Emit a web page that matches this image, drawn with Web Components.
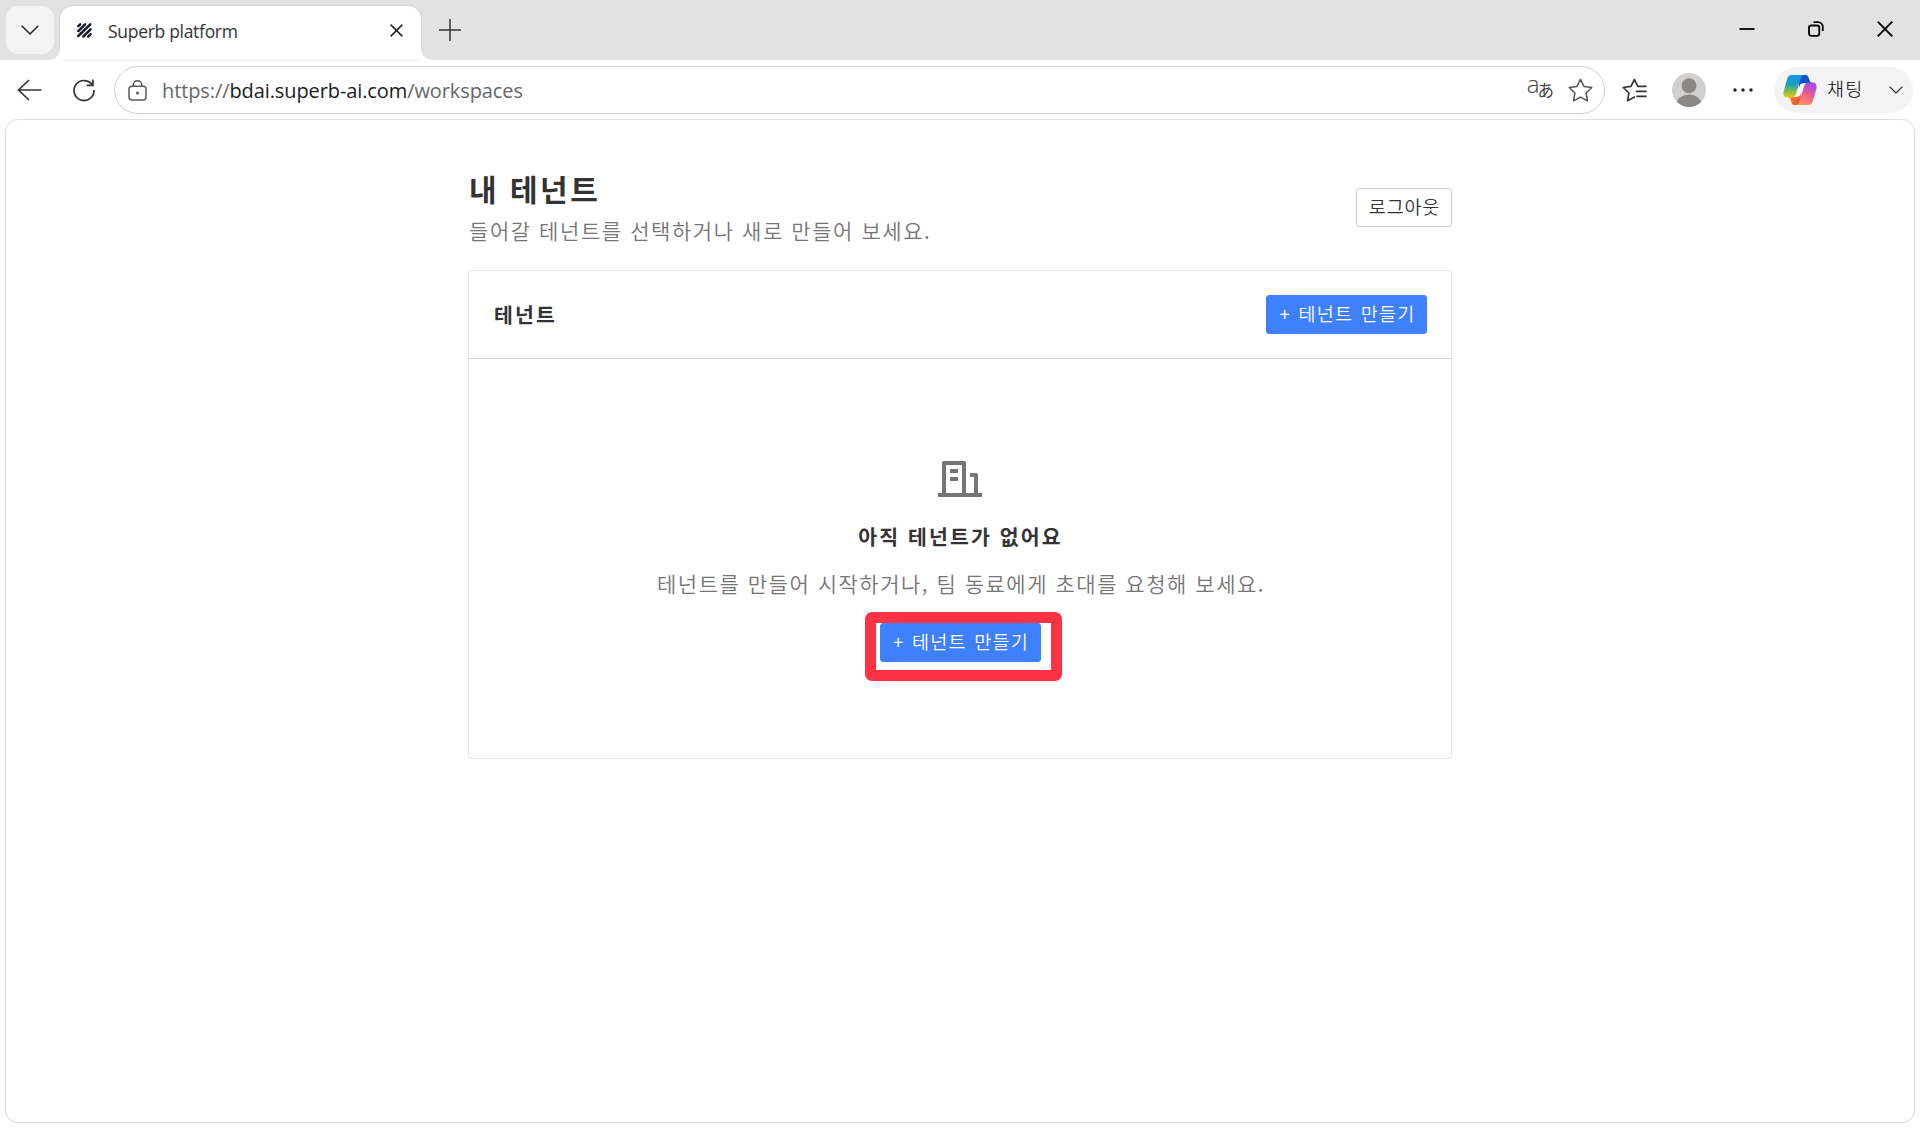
<!DOCTYPE html>
<html lang="ko">
<head>
<meta charset="utf-8">
<title>Superb platform</title>
<style>
  html, body {
    margin: 0;
    height: 100%;
  }

  body {
    font-family: "Open Sans", "Noto Sans CJK KR", sans-serif;
    background: #ffffff;
    color: #333333;
    overflow: hidden;
  }
</style>
</head>
<body>
<browser-window>
  <tab-strip slot="tabs">
    <browser-tab>Superb platform</browser-tab>
  </tab-strip>
  <nav-bar slot="nav">
    <address-field>https://<b>bdai.superb-ai.com</b>/workspaces</address-field>
  </nav-bar>
  <tenant-page></tenant-page>
</browser-window>

<script>
const icons = {
  chevron: `<svg width="18" height="10" viewBox="0 0 18 10"><path d="M.7.8 9 9 17.3.8" fill="none" stroke="#222" stroke-width="1.5"/></svg>`,
  close: `<svg width="13" height="13" viewBox="0 0 13 13"><path d="M.6.6 12.4 12.4M12.4.6.6 12.4" stroke="#222" stroke-width="1.5"/></svg>`,
  plus: `<svg width="22" height="22" viewBox="0 0 22 22"><path d="M11 0V22M0 11H22" stroke="#333" stroke-width="1.5"/></svg>`,
  logo: `<svg width="15" height="15" viewBox="0 0 15 15"><g stroke="#15152b" stroke-width="2.5" stroke-linecap="round"><path d="M1.3 3.2 3.2 1.3M1.3 8.1 8.1 1.3M1.3 13 13.2 1.3M6.4 13.5 13.5 6.4M11.2 13.6 13.6 11.2"/></g></svg>`,
  back: `<svg width="25" height="22" viewBox="0 0 25 22"><path d="M12 1 1.5 11 12 21M1.5 11H24.5" fill="none" stroke="#333" stroke-width="1.7"/></svg>`,
  reload: `<svg width="24" height="24" viewBox="0 0 24 24"><path d="M20.6 7.4A10 10 0 1 0 22 12M20.9 1.4V7.4H14.600" fill="none" stroke="#333" stroke-width="1.7"/></svg>`,
  lock: `<svg width="19" height="21" viewBox="0 0 19 21"><rect x="1" y="6.2" width="17" height="13.8" rx="3" fill="none" stroke="#5a5a5a" stroke-width="1.5"/><path d="M5.2 6V5a4.3 4.3 0 0 1 8.6 0V6" fill="none" stroke="#5a5a5a" stroke-width="1.5"/><circle cx="9.5" cy="13" r="1.5" fill="#5a5a5a"/></svg>`,
  star: `<svg width="25" height="24" viewBox="0 0 25 24"><path d="M12.5 1.3 16 8.4 23.8 9.5 18.1 15 19.5 22.8 12.5 19.1 5.5 22.8 6.9 15 1.2 9.5 9 8.4Z" fill="none" stroke="#555" stroke-width="1.5" stroke-linejoin="round"/></svg>`,
  favorites: `<svg width="25" height="24" viewBox="0 0 25 24"><g fill="none" stroke="#333" stroke-width="1.6" stroke-linejoin="round" stroke-linecap="round"><path d="M16.2 8.4H15.8L12.4 1.3 9 8.4 1.2 9.5 6.9 15 5.5 22.8 12.5 19M16 8.4H24M14.5 13.4H24M15 18.4H24"/></g></svg>`,
  avatar: `<svg width="34" height="34" viewBox="0 0 34 34"><defs><clipPath id="c"><circle cx="17" cy="17" r="17"/></clipPath></defs><g clip-path="url(#c)"><rect width="34" height="34" fill="#d2d0ce"/><circle cx="17" cy="12.7" r="7.4" fill="#8a8886"/><ellipse cx="17" cy="31.5" rx="12.6" ry="10" fill="#8a8886"/></g></svg>`,
  dots: `<svg width="20" height="4" viewBox="0 0 20 4"><g fill="#222"><circle cx="2" cy="2" r="1.7"/><circle cx="10" cy="2" r="1.7"/><circle cx="18" cy="2" r="1.7"/></g></svg>`,
  copilot: `<svg width="34" height="32" viewBox="0 0 34 32">
    <defs>
      <linearGradient id="a" x1="0" y1="0" x2="0" y2="1"><stop offset="0" stop-color="#1499e0"/><stop offset=".4" stop-color="#1a9bc4"/><stop offset=".72" stop-color="#7fc04a"/><stop offset="1" stop-color="#f2c511"/></linearGradient>
      <linearGradient id="b" x1=".6" y1="0" x2=".3" y2="1"><stop offset="0" stop-color="#a34be8"/><stop offset=".5" stop-color="#ec5a93"/><stop offset="1" stop-color="#fb9a5a"/></linearGradient>
      <linearGradient id="d" x1="0" y1="0" x2="1" y2="1"><stop offset="0" stop-color="#1557d8"/><stop offset="1" stop-color="#1b45b4"/></linearGradient>
      <linearGradient id="e" x1="0" y1="0" x2="1" y2="1"><stop offset="0" stop-color="#fba63a"/><stop offset="1" stop-color="#e8412f"/></linearGradient>
    </defs>
    <path d="M16 1H22C25 1 25.600 3 26.400 6 27 8 28 9 30 9H21C18 9 17 11 16 14Z" fill="url(#d)"/>
    <path d="M18 31H12C9 31 8.500 29 7.700 26 7.100 24 6.500 23 4.500 23H13C16 23 17 21 18 18Z" fill="url(#e)"/>
    <path d="M8.500 1H21C18.500 1 17.800 3.500 17 6.500L13.500 18C12.600 21 11.500 23.500 8 23.500H4.500C.5 23.500-.2 20 .8 16.500L4 5.500C4.900 2.500 6 1 8.500 1Z" fill="url(#a)"/>
    <path d="M25.500 31H13C15.500 31 16.200 28.500 17 25.500L20.500 14C21.400 11 22.500 8.500 26 8.500H29.500C33.500 8.500 34.200 12 33.200 15.500L30 26.500C29.100 29.500 28 31 25.500 31Z" fill="url(#b)"/>
    <path d="M17.500 10H21.500C20 11 19.500 13 19 15L17.500 20C17 21.500 16.500 22 15 22H12.500C14 21 14.300 20 15 18Z" fill="#fff"/>
  </svg>`,
  minimize: `<svg width="16" height="16" viewBox="0 0 16 16"><path d="M.5 8H15.500" stroke="#000" stroke-width="1.800"/></svg>`,
  restore: `<svg width="16" height="16" viewBox="0 0 16 16"><rect x="1" y="4.500" width="10.300" height="10.300" rx="2.200" fill="none" stroke="#000" stroke-width="1.800"/><path d="M5.500 1.200H10A4.800 4.800 0 0 1 14.800 6V10" fill="none" stroke="#000" stroke-width="1.800"/></svg>`,
  closeWindow: `<svg width="16" height="16" viewBox="0 0 16 16"><path d="M.7.7 15.300 15.300M15.300.7.7 15.300" stroke="#000" stroke-width="1.900"/></svg>`,
  building: `<svg width="44" height="36" viewBox="0 0 44 36"><path fill="#757575" d="M0 32H4V2A2 2 0 0 1 6 0H26A2 2 0 0 1 28 2V32H36V16H32V12H38A2 2 0 0 1 40 14V32H44V36H0ZM8 4V32H24V4ZM12 8H20V12H12ZM12 16H20V20H12Z" fill-rule="evenodd"/></svg>`,
};

function define(name, html) {
  const template = document.createElement("template");
  template.innerHTML = html;
  customElements.define(name, class extends HTMLElement {
    constructor() {
      super();
      this.attachShadow({ mode: "open" });
      this.shadowRoot.appendChild(template.content.cloneNode(true));
    }
  });
}

class UiIcon extends HTMLElement {
  constructor() {
    super();
    this.attachShadow({ mode: "open" });
  }

  connectedCallback() {
    this.shadowRoot.innerHTML = `
      <style>
        :host { display: block; flex: none; line-height: 0; }
        svg { display: block; overflow: visible; }
      </style>
      ${icons[this.getAttribute("name")]}`;
  }
}
customElements.define("ui-icon", UiIcon);

define("browser-window", `
<style>
  :host {
    display: flex;
    flex-direction: column;
    height: 1128px;
    box-sizing: border-box;
    background: #ffffff;
  }
  .viewport {
    flex: 1;
    margin: 0 5px 5px;
    border: 1px solid #dedede;
    border-radius: 13px;
    box-shadow: 0 0 1px #d8d8d8;
    box-sizing: border-box;
  }
</style>
<slot name="tabs"></slot>
<slot name="nav"></slot>
<div class="viewport"><slot></slot></div>
`);

define("tab-strip", `
<style>
  :host {
    display: flex;
    justify-content: space-between;
    height: 60px;
    background: #e2e2e2;
  }
  .left, .controls {
    display: flex;
    align-items: center;
  }
  .actions {
    display: flex;
    align-items: center;
    justify-content: center;
    width: 48px;
    height: 48px;
    margin: 0 6px;
    border-radius: 12px;
    background: #f4f4f4;
  }
  .add {
    margin-left: 18px;
  }
  .controls {
    gap: 53px;
    padding: 0 27px 2px 0;
  }
</style>
<div class="left">
  <div class="actions"><ui-icon name="chevron"></ui-icon></div>
  <slot></slot>
  <ui-icon class="add" name="plus"></ui-icon>
</div>
<div class="controls">
  <ui-icon name="minimize"></ui-icon>
  <ui-icon name="restore"></ui-icon>
  <ui-icon name="closeWindow"></ui-icon>
</div>
`);

define("browser-tab", `
<style>
  :host {
    display: flex;
    align-items: center;
    align-self: flex-end;
    position: relative;
    width: 361px;
    height: 54px;
    box-sizing: border-box;
    padding: 0 18px 6px 17px;
    border-radius: 13px 13px 0 0;
    background: #ffffff;
    box-shadow: 0 0 2px rgba(0, 0, 0, .2);
  }
  /* curved feet where the tab meets the toolbar */
  :host::before, :host::after {
    content: "";
    position: absolute;
    bottom: 0;
    width: 10px;
    height: 10px;
  }
  :host::before {
    left: -10px;
    background: radial-gradient(circle at 0 0, #e2e2e2 9px, #ffffff 10px);
  }
  :host::after {
    right: -10px;
    background: radial-gradient(circle at 100% 0, #e2e2e2 9px, #ffffff 10px);
  }
  .title {
    flex: 1;
    margin-left: 16px;
    padding-top: 1px;
    font-size: 17.5px;
    color: #333;
    letter-spacing: -.3px;
  }
</style>
<ui-icon name="logo"></ui-icon>
<div class="title"><slot></slot></div>
<ui-icon name="close"></ui-icon>
`);

define("nav-bar", `
<style>
  :host {
    display: flex;
    align-items: center;
    height: 59px;
    box-sizing: border-box;
    padding: 1px 7px 0 17px;
  }
  .reload { margin: 0 18px 0 30px; }
  .favorites { margin: 0 25px 0 17px; }
  .dots { margin: 0 21px 0 27px; }
  .copilot {
    display: flex;
    align-items: center;
    width: 139px;
    height: 46px;
    box-sizing: border-box;
    padding: 0 10px 0 9px;
    border-radius: 23px;
    background: #f3f3f3;
  }
  .label {
    flex: 1;
    margin: 0 0 4px 10px;
    font: 300 18.5px "Noto Sans CJK KR", sans-serif;
    letter-spacing: 1.2px;
    color: #000;
  }
  .copilot ui-icon:last-child { zoom: .78; }
  ::slotted(address-field) { flex: 1; }
</style>
<ui-icon name="back"></ui-icon>
<ui-icon class="reload" name="reload"></ui-icon>
<slot></slot>
<ui-icon class="favorites" name="favorites"></ui-icon>
<ui-icon name="avatar"></ui-icon>
<ui-icon class="dots" name="dots"></ui-icon>
<div class="copilot">
  <ui-icon name="copilot"></ui-icon>
  <div class="label">채팅</div>
  <ui-icon name="chevron"></ui-icon>
</div>
`);

define("address-field", `
<style>
  :host {
    display: block;
  }
  .field {
    display: flex;
    align-items: center;
    height: 48px;
    box-sizing: border-box;
    padding: 0 11px 0 13px;
    border: 1px solid #cfcfcf;
    border-radius: 24px;
  }
  .url {
    flex: 1;
    margin-left: 15px;
    font-size: 20px;
    letter-spacing: -.1px;
    color: #666;
  }
  ::slotted(b) {
    font-weight: 400;
    color: #1b1b1b;
  }
  .translate {
    display: flex;
    margin-right: 15px;
    font: 300 24px/26px "Open Sans", "Noto Sans CJK JP", sans-serif;
    color: #444;
  }
  .translate span:first-child {
    margin-top: -3px;
  }
  .translate span + span {
    font: 16.5px/33px "Noto Sans CJK JP", sans-serif;
    margin: 0 -1px 0 -2px;
  }
</style>
<div class="field">
  <ui-icon name="lock"></ui-icon>
  <div class="url"><slot></slot></div>
  <div class="translate"><span>a</span><span>あ</span></div>
  <ui-icon name="star"></ui-icon>
</div>
`);

define("app-button", `
<style>
  :host {
    display: flex;
    align-items: center;
    justify-content: center;
    width: 96px;
    height: 39px;
    box-sizing: border-box;
    padding: 0 0 2px 1px;
    border: 1px solid #cccccc;
    border-radius: 3px;
    background: #ffffff;
    color: #333333;
    font: 350 18.5px/1 "Noto Sans CJK KR", sans-serif;
    letter-spacing: .8px;
    white-space: pre;
  }
  :host([primary]) {
    width: 161px;
    padding-left: 2px;
    border-color: #3e80ff;
    background: #3e80ff;
    color: #ffffff;
    letter-spacing: 1.2px;
    word-spacing: 1.2px;
  }
</style>
<slot></slot>
`);

define("tenant-card", `
<style>
  :host {
    display: flex;
    flex-direction: column;
    height: 489px;
    box-sizing: border-box;
    border: 1px solid #e4e4e4;
    border-radius: 3px;
  }
  header {
    display: flex;
    align-items: center;
    justify-content: space-between;
    height: 88px;
    box-sizing: border-box;
    padding: 0 24px 0 25px;
    border-bottom: 1px solid #d0d0d0;
  }
  h2 {
    margin: 0 0 2px;
    font-size: 20.5px;
    font-weight: 700;
    letter-spacing: 2.2px;
  }
</style>
<header><h2>테넌트</h2><app-button primary>+ 테넌트 만들기</app-button></header>
<slot></slot>
`);

define("empty-state", `
<style>
  :host {
    display: flex;
    flex-direction: column;
    align-items: center;
    padding-top: 102px;
  }
  h3, p {
    margin: 0;
    line-height: 30px;
    white-space: nowrap;
  }
  h3 {
    margin-top: 24px;
    padding-left: 1px;
    font-size: 20.5px;
    font-weight: 700;
    letter-spacing: 2.1px;
  }
  p {
    margin-top: 17px;
    padding-left: 2px;
    font-size: 21px;
    font-weight: 350;
    letter-spacing: 1.52px;
    color: #757575;
  }
  .action {
    position: relative;
    margin-top: 25px;
  }
  .mark {
    position: absolute;
    left: -15px;
    top: -11px;
    width: 197px;
    height: 69px;
    box-sizing: border-box;
    border: 11px solid #fc3345;
    border-radius: 7px;
  }
</style>
<ui-icon name="building"></ui-icon>
<h3>아직 테넌트가 없어요</h3>
<p>테넌트를 만들어 시작하거나, 팀 동료에게 초대를 요청해 보세요.</p>
<div class="action">
  <app-button primary>+ 테넌트 만들기</app-button>
  <div class="mark"></div>
</div>
`);

define("tenant-page", `
<style>
  :host {
    display: block;
    width: 984px;
    margin: 0 auto;
    padding-top: 50px;
    font-family: "Noto Sans CJK KR", sans-serif;
    color: #333333;
  }
  .heading {
    display: flex;
    justify-content: space-between;
    height: 100px;
  }
  h1 {
    margin: -2px 0 0 1px;
    font-size: 30px;
    line-height: 40px;
    font-weight: 700;
    letter-spacing: 2.5px;
  }
  p {
    margin: 7px 0 0 1px;
    font-size: 21px;
    line-height: 30px;
    font-weight: 350;
    letter-spacing: 1.57px;
    color: #757575;
  }
  .logout { margin-top: 18px; }
</style>
<div class="heading">
  <div>
    <h1>내 테넌트</h1>
    <p>들어갈 테넌트를 선택하거나 새로 만들어 보세요.</p>
  </div>
  <app-button class="logout">로그아웃</app-button>
</div>
<tenant-card><empty-state></empty-state></tenant-card>
`);
</script>
</body>
</html>
